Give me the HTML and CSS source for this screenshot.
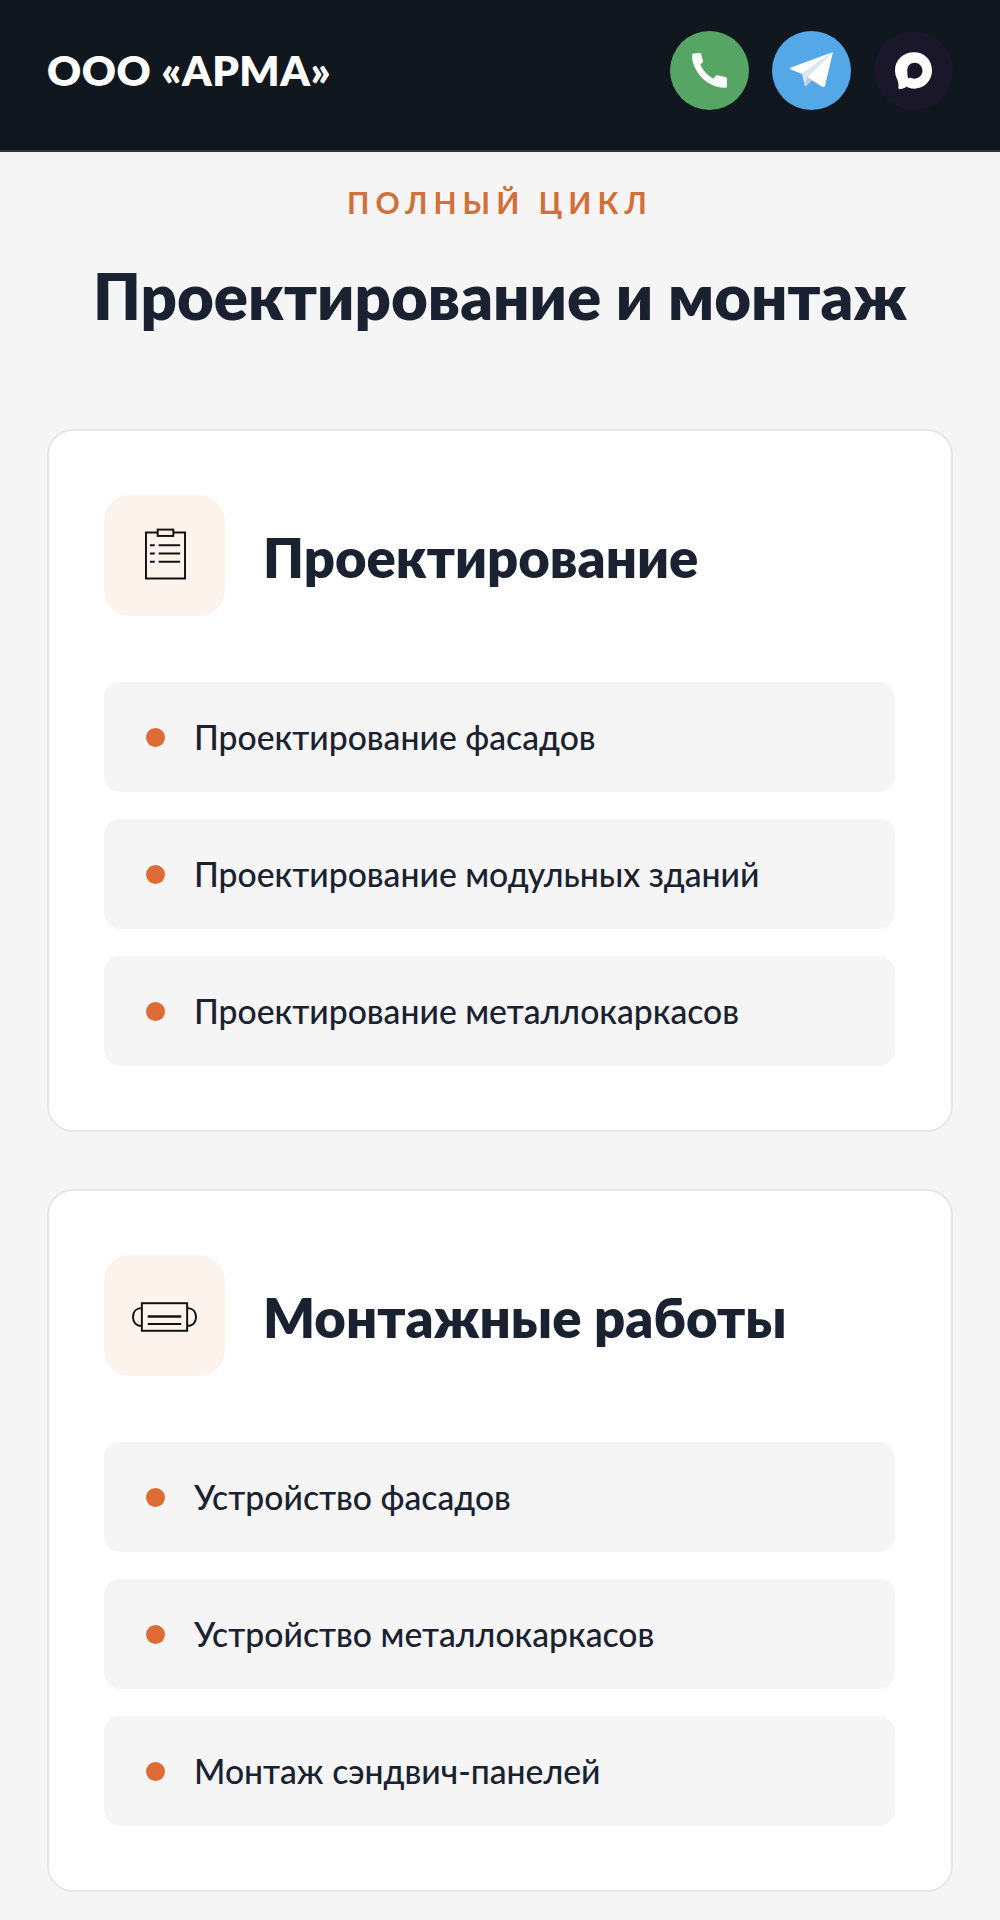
FILE: index.html
```html
<!DOCTYPE html>
<html lang="ru">
<head>
<meta charset="utf-8">
<title>ООО «АРМА»</title>
<link rel="stylesheet" href="styles.css">
</head>
<body>
<header class="header">
  <div class="logo">ООО «АРМА»</div>
  <div class="contacts">
    <a class="contact contact-phone">
      <svg viewBox="0 0 35 35" width="35" height="35"><path fill="#fff" d="M1.500.5 7.500 0C8.500 0 9 .5 9.200 1.200L11 8C11.200 8.800 11 9.400 10.400 9.800L8.300 11.200C10.500 17 16 23 21.500 25.500L23.500 23C24 22.400 24.600 22.200 25.300 22.300L33.500 24C34.400 24.200 35 25 35 25.800V33C35 34 34.200 34.800 33 34.800 16 35 0 19 0 2 0 1 .5.600 1.500.5Z"/></svg>
    </a>
    <a class="contact contact-telegram">
      <svg viewBox="0 0 43 35.500" width="43" height="35.500"><path fill="#b5d0e8" d="M15 34 12 22l5 3 5 3.500-5.500 5.500c-.5.400-1.200.4-1.500 0Z"/><path fill="#dbe7f2" d="M12 22 43 0 17 25l-2 9Z"/><path fill="#fff" d="M43 0 12 22 1 17.500c-1-.5-1-1.500 0-2Z"/><path fill="#fff" d="M43 0 35 33.500c-.4 1.500-2 1.900-3 1.300L17 25Z"/></svg>
    </a>
    <a class="contact contact-max">
      <svg viewBox="0 0 37 37" width="37" height="37"><path fill="#fff" fill-rule="evenodd" d="M19 .3C29.500.3 37 8 37 18.500 37 29 29 36.700 19 36.700 15.500 36.700 13.500 36 11.800 34.600 9.500 36.500 5.500 37.500 3.200 36.500 3.800 33 3.500 31 2.500 28 1 25 0 22 0 18 0 8 8.500.3 19 .3ZM19.500 10.700C15.300 10.700 12.300 14 12.300 18.500 12.300 21 12.500 24 13 26 13.700 26.500 14.700 26 15.500 25.600 16.500 26.300 17.500 26.700 19.500 26.700 23.800 26.700 27.500 23.300 27.500 18.600 27.500 14 23.800 10.700 19.500 10.700Z"/></svg>
    </a>
  </div>
</header>
<main class="main">
  <p class="eyebrow">ПОЛНЫЙ ЦИКЛ</p>
  <h1 class="title">Проектирование и монтаж</h1>
  <section class="card">
    <div class="card-head">
      <div class="card-icon">
        <svg class="glyph-doc" viewBox="0 0 42 52" width="41" height="52" fill="none" stroke="#111" stroke-width="2"><path d="M13 4H1v47h40V4H29"/><rect x="13" y="1" width="16" height="6.500"/><path d="M5 17h5M14 17h22M5 25.500h5M14 25.500h22M5 34h5M14 34h22"/></svg>
      </div>
      <h2 class="card-title">Проектирование</h2>
    </div>
    <ul class="list">
      <li class="item"><span class="dot"></span>Проектирование фасадов</li>
      <li class="item"><span class="dot"></span>Проектирование модульных зданий</li>
      <li class="item"><span class="dot"></span>Проектирование металлокаркасов</li>
    </ul>
  </section>
  <section class="card">
    <div class="card-head">
      <div class="card-icon">
        <svg class="glyph-mask" viewBox="0 0 66 30" width="65" height="30" fill="none" stroke="#111" stroke-width="2"><rect x="10" y="1" width="46" height="28"/><path d="M10 6C4 6 1 10 1 15s3 9 9 9M56 6c6 0 9 4 9 9s-3 9-9 9"/><path d="M16 22h34"/><path d="M16 14.500h34" stroke-width="2.500"/></svg>
      </div>
      <h2 class="card-title">Монтажные работы</h2>
    </div>
    <ul class="list">
      <li class="item"><span class="dot"></span>Устройство фасадов</li>
      <li class="item"><span class="dot"></span>Устройство металлокаркасов</li>
      <li class="item"><span class="dot"></span>Монтаж сэндвич-панелей</li>
    </ul>
  </section>
</main>
</body>
</html>
```
FILE: styles.css
```css
* { box-sizing: border-box; }
html, body { margin: 0; padding: 0; }
body {
  background: #f5f5f6;
  font-family: "Lato", "Noto Sans", sans-serif;
  color: #1a2130;
}
.header {
  height: 152px;
  padding: 0 47px;
  background: #10171f;
  border-bottom: 2px solid #2f343b;
  display: flex;
  align-items: center;
  justify-content: space-between;
}
.logo {
  color: #fff;
  font-size: 42px;
  font-weight: 800;
  letter-spacing: 0.5px;
  margin-top: -10px;
}
.contacts { display: flex; gap: 23px; margin-top: -10px; }
.contact {
  width: 79px;
  height: 79px;
  border-radius: 50%;
  display: flex;
  align-items: center;
  justify-content: center;
}
.contact-phone { background: #56a564; }
.contact-telegram { background: #55a8e8; }
.contact-max { background: #191729; }
.main { padding: 30px 47px 0; }
.eyebrow {
  margin: 0;
  text-align: center;
  color: #d17139;
  font-size: 30px;
  line-height: 40px;
  font-weight: 700;
  letter-spacing: 6px;
}
.title {
  margin: 36px 0 95px;
  text-align: center;
  font-size: 63.500px;
  line-height: 76px;
  font-weight: 800;
}
.card {
  height: 703px;
  margin-bottom: 57px;
  padding: 64px 56px 64px 55px;
  background: #fff;
  border: 2px solid #e7e7ea;
  border-radius: 26px;
}
.card-head { display: flex; align-items: center; gap: 38px; margin-bottom: 66px; }
.card-icon {
  width: 121px;
  height: 121px;
  background: #fdf3ed;
  border-radius: 26px;
  display: flex;
  align-items: center;
  justify-content: center;
}
.glyph-doc { margin: 0 0 4px 2px; }
.glyph-mask { margin-top: 2px; }
.card-title { margin: 3px 0 0; font-size: 54.400px; font-weight: 800; line-height: 64px; }
.list { list-style: none; margin: 0; padding: 0; display: flex; flex-direction: column; gap: 27px; }
.item {
  height: 110px;
  padding-left: 42px;
  background: #f5f5f6;
  border-radius: 16px;
  display: flex;
  align-items: center;
  gap: 29px;
  font-size: 33.700px;
  font-weight: 500;
}
.dot { width: 19px; height: 19px; border-radius: 50%; background: #dd6b33; flex: none; }
```
